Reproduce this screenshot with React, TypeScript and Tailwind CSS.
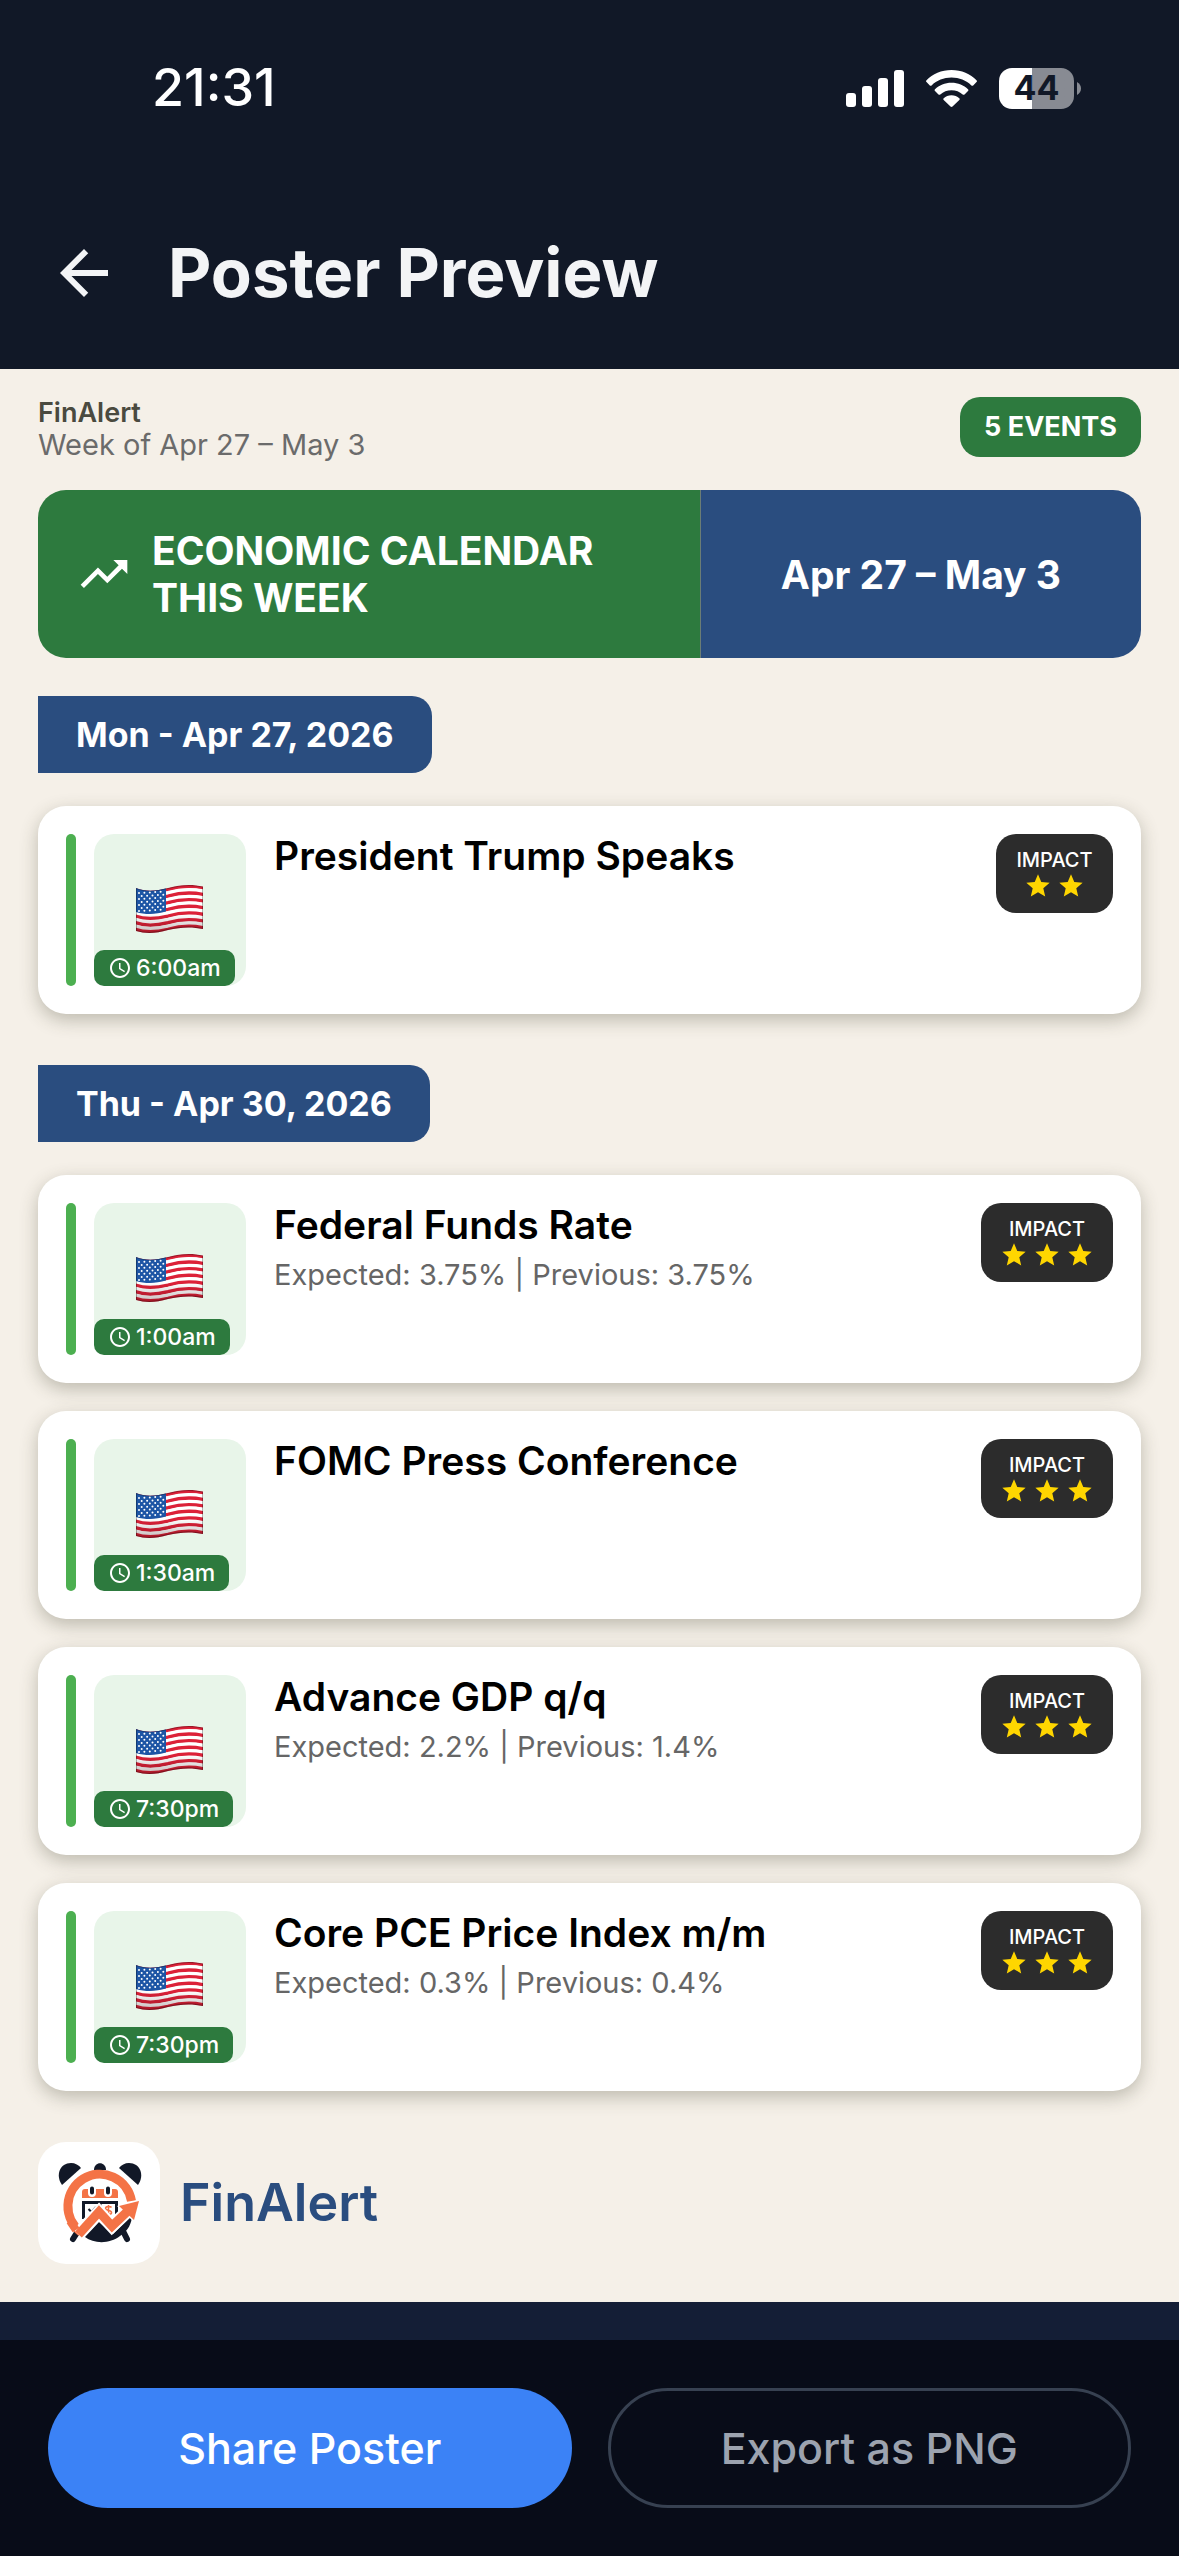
import React from 'react';
import { MdArrowBack, MdOutlineAccessTime, MdStar, MdTrendingUp } from 'react-icons/md';

interface EconomicEvent {
  id: string;
  title: string;
  time: string;
  impact: number;
  expected?: string;
  previous?: string;
}

interface DayGroup {
  label: string;
  events: EconomicEvent[];
}

const days: DayGroup[] = [
  {
    label: 'Mon - Apr 27, 2026',
    events: [{ id: 'trump', title: 'President Trump Speaks', time: '6:00am', impact: 2 }],
  },
  {
    label: 'Thu - Apr 30, 2026',
    events: [
      { id: 'ffr', title: 'Federal Funds Rate', time: '1:00am', impact: 3, expected: '3.75%', previous: '3.75%' },
      { id: 'fomc', title: 'FOMC Press Conference', time: '1:30am', impact: 3 },
      { id: 'gdp', title: 'Advance GDP q/q', time: '7:30pm', impact: 3, expected: '2.2%', previous: '1.4%' },
      { id: 'pce', title: 'Core PCE Price Index m/m', time: '7:30pm', impact: 3, expected: '0.3%', previous: '0.4%' },
    ],
  },
];

const StatusBar: React.FC = () => (
  <div className="flex items-center justify-between pt-14 pl-[152px] pr-[98px] text-white">
    <span className="text-[52px] leading-[64px] font-medium">21:31</span>
    <div className="flex items-center gap-[22px]">
      <svg width="58" height="37" viewBox="0 0 58 37" fill="currentColor">
        <rect x="0" y="23" width="10" height="14" rx="3" />
        <rect x="16" y="16" width="10" height="21" rx="3" />
        <rect x="32" y="8" width="10" height="29" rx="3" />
        <rect x="48" y="0" width="10" height="37" rx="3" />
      </svg>
      <svg width="51" height="37" viewBox="0 0 51 37" fill="currentColor">
        <path d="M25.500 0C35.500 0 44.500 4 50.500 10.300C51.100 10.900 51.100 11.500 50.500 12.100L47.200 15.400C46.600 16 46 16 45.400 15.400C40.200 10.500 33.200 7.600 25.500 7.600S10.800 10.500 5.600 15.400C5 16 4.400 16 3.800 15.400L.5 12.100C-.1 11.500-.1 10.900.5 10.300C6.500 4 15.500 0 25.500 0Z" />
        <path d="M25.500 12.700C32 12.700 37.900 15.200 42 19.200C42.600 19.800 42.600 20.400 42 21L38.500 24.400C37.900 25 37.300 25 36.700 24.400C33.700 21.800 29.800 20.200 25.500 20.200S17.300 21.800 14.300 24.400C13.700 25 13.100 25 12.500 24.400L9 21C8.400 20.400 8.400 19.800 9 19.200C13.100 15.200 19 12.700 25.500 12.700Z" />
        <path d="M25.500 25.200C28.500 25.200 31.300 26.300 33.300 28.200C33.900 28.800 33.900 29.400 33.300 30L26.500 36.500C25.900 37.100 25.100 37.100 24.500 36.500L17.700 30C17.100 29.400 17.100 28.800 17.700 28.200C19.700 26.300 22.500 25.200 25.500 25.200Z" />
      </svg>
      <div className="flex items-center gap-[3px]">
        <div className="flex h-[41px] w-[75px] items-center justify-center rounded-[13px] bg-linear-to-r from-white from-44% to-[#888b93] to-44% text-[34px] leading-none font-bold text-[#111827]">
          44
        </div>
        <svg width="4" height="13" viewBox="0 0 4 13" className="text-[#888b93]" fill="currentColor">
          <path d="M0 0C2.500 1.200 4 3.700 4 6.500S2.500 11.800 0 13Z" />
        </svg>
      </div>
    </div>
  </div>
);

const stripes = [0, 1, 2, 3, 4, 5, 6, 7, 8, 9, 10, 11, 12];

const UsFlag: React.FC = () => (
  <svg width="68" height="50" viewBox="0 0 68 50" role="img" aria-label="US">
    <defs>
      <clipPath id="flag-shape">
        <path d="M0 4C10 8 20 7 32 4C44 .5 56 0 67 2.500V45C56 42.500 44 43 32 46C20 49.500 10 50 0 47Z" />
      </clipPath>
      <linearGradient id="flag-shade" x1="0" y1="0" x2="0" y2="1">
        <stop offset="0.6" stopColor="#000" stopOpacity="0" />
        <stop offset="1" stopColor="#300" stopOpacity="0.28" />
      </linearGradient>
    </defs>
    <g clipPath="url(#flag-shape)">
      <rect width="68" height="50" fill="#fff" />
      {stripes.map((i) => (
        <path
          key={i}
          d="M-1 5.300C10 9.500 20 8.500 32 5.500C44 2 56 1.500 68 4"
          transform={`translate(0 ${i * 3.33})`}
          fill="none"
          stroke={i % 2 === 0 ? '#dc2138' : '#fff'}
          strokeWidth="3.600"
        />
      ))}
      <path d="M0 2C10 7 20 6 30 3V27.500C20 30.500 10 31 0 28Z" fill="#1d55a5" />
      {[0, 1, 2, 3, 4, 5, 6].map((row) =>
        [0, 1, 2, 3, 4].map((col) => (
          <circle
            key={`${row}-${col}`}
            cx={3 + col * 5.4 + (row % 2) * 2.7}
            cy={9 + row * 3 - col * 0.3}
            r="1"
            fill="#fff"
          />
        ))
      )}
      <rect width="68" height="50" fill="url(#flag-shade)" />
      <path
        d="M0 4C10 8 20 7 32 4C44 .5 56 0 67 2.500V45C56 42.500 44 43 32 46C20 49.500 10 50 0 47Z"
        fill="none"
        stroke="#000"
        strokeOpacity="0.3"
        strokeWidth="2"
      />
    </g>
  </svg>
);

const Logo: React.FC = () => (
  <svg width="96" height="96" viewBox="0 0 96 96" aria-hidden="true">
    {/* bells and knob */}
    <g fill="#111827">
      <path d="M11 30C4 20 9 8 20 8C24 8 28 10 30 13Z" />
      <path d="M87 30C94 20 89 8 78 8C74 8 70 10 68 13Z" />
      <path d="M43 15C43 6 55 6 55 15Z" />
    </g>
    {/* feet and lower body */}
    <path d="M27 76L22 84M72 76L76 84" stroke="#111827" strokeWidth="6" strokeLinecap="round" />
    <path d="M34 82L48 67L62 79L81 60C81 68 77 76 69 81C59 89 43 89 34 82Z" fill="#111827" />
    <path d="M30 77A32 32 0 1 1 80.500 46" fill="none" stroke="#f47346" strokeWidth="9" />
    {/* calendar */}
    <path d="M31 37Q31 34 34 34H64Q67 34 67 37V43H31Z" fill="#f47346" />
    <path d="M41 33V38M57 33V38" stroke="#fff" strokeWidth="8" strokeLinecap="round" />
    <path d="M41 33.500V37.500M57 33.500V37.500" stroke="#111827" strokeWidth="4" strokeLinecap="round" />
    <path d="M32.500 64V47.500H65.500V60M49 47V52" fill="none" stroke="#111827" strokeWidth="3" />
    <path d="M37.500 54L40.500 57L45 52" fill="none" stroke="#111827" strokeWidth="2" />
    <path
      d="M60.500 52.500C59.500 51 54.500 51 54.500 53.500C54.500 56 60.500 54.500 60.500 57.500C60.500 60 55.500 60 54.500 58M57.500 50V61"
      fill="none"
      stroke="#f47346"
      strokeWidth="1.600"
    />
    {/* rising arrow */}
    <path d="M27 79L48 57L61 71L79 54" fill="none" stroke="#fff" strokeWidth="13" />
    <path d="M66 51L90 44L84 68Z" fill="#fff" />
    <path d="M19 66L25 75" stroke="#f47346" strokeWidth="8" />
    <path d="M27.500 79.500L48 57L61 71L79 54" fill="none" stroke="#f47346" strokeWidth="9" />
    <path d="M68 51L88 46L83 65Z" fill="#f47346" />
  </svg>
);

const ImpactBadge: React.FC<{ level: number }> = ({ level }) => (
  <div className="flex min-w-[117px] flex-col items-center rounded-[20px] bg-[#2c2c2c] px-[19px] pt-[14px] pb-[13px]">
    <span className="text-[20px] leading-6 font-medium text-white">IMPACT</span>
    <div className="flex gap-[5px]">
      {Array.from({ length: level }, (_, i) => (
        <MdStar key={i} size={28} className="text-[#ffd600]" />
      ))}
    </div>
  </div>
);

const EventCard: React.FC<{ event: EconomicEvent }> = ({ event }) => (
  <li className="flex items-start rounded-[28px] bg-white p-7 shadow-[0_6px_18px_rgba(60,60,40,0.3)]">
    <div className="w-[10px] self-stretch rounded-full bg-[#4caf50]" />
    <div className="ml-[18px] flex h-[152px] w-[152px] flex-col justify-between rounded-[20px] bg-[#e8f5e9]">
      <div className="flex justify-center pt-[50px]">
        <UsFlag />
      </div>
      <div className="flex items-center gap-1 self-start rounded-[10px] bg-[#2d7a3e] px-[14px] py-1 text-[23px] leading-7 font-medium text-white">
        <MdOutlineAccessTime size={24} />
        {event.time}
      </div>
    </div>
    <div className="ml-7 flex-1">
      <h3 className="text-[39px] leading-[44px] font-semibold text-black">{event.title}</h3>
      {event.expected && (
        <p className="mt-[10px] text-[29px] leading-9 text-[#666666]">
          Expected: {event.expected} | Previous: {event.previous}
        </p>
      )}
    </div>
    <ImpactBadge level={event.impact} />
  </li>
);

export default function App() {
  return (
    <div className="flex min-h-screen flex-col bg-[#141e36] font-[Inter,sans-serif]">
      <header className="bg-[#111827] pb-[56px]">
        <StatusBar />
        <div className="mt-[113px] flex items-center gap-[48px] pl-12 text-[#f3f4f6]">
          <button type="button" aria-label="Back">
            <MdArrowBack size={72} />
          </button>
          <h1 className="text-[67px] leading-[80px] font-bold">Poster Preview</h1>
        </div>
      </header>

      <main className="bg-[#f5f0e8] px-[38px] pt-7 pb-[38px]">
        <div className="flex items-start justify-between">
          <div>
            <p className="text-[27px] leading-8 font-semibold text-[#4a4a3f]">FinAlert</p>
            <p className="text-[29px] leading-8 text-[#6b6b6b]">Week of Apr 27 – May 3</p>
          </div>
          <span className="rounded-[20px] bg-[#2d7a3e] px-6 py-[14px] text-[27px] leading-8 font-bold text-white">
            5 EVENTS
          </span>
        </div>

        <div className="mt-[29px] flex overflow-hidden rounded-[28px] text-[39px] leading-[47px] font-bold text-white">
          <div className="flex w-3/5 items-center gap-5 bg-[#2d7a3e] px-[38px] py-[37px]">
            <MdTrendingUp size={56} className="shrink-0" />
            <h2>ECONOMIC CALENDAR THIS WEEK</h2>
          </div>
          <div className="flex w-2/5 items-center justify-center border-l border-[#6b7d76] bg-[#2a4d7f]">
            Apr 27 – May 3
          </div>
        </div>

        {days.map((day, index) => (
          <section key={day.label} className={index === 0 ? 'mt-[38px]' : 'mt-[51px]'}>
            <h2 className="w-fit rounded-r-[20px] bg-[#2a4d7f] px-[38px] py-[18px] text-[34px] leading-[41px] font-bold text-white">
              {day.label}
            </h2>
            <ul className="mt-[33px] space-y-7">
              {day.events.map((event) => (
                <EventCard key={event.id} event={event} />
              ))}
            </ul>
          </section>
        ))}

        <div className="mt-[51px] flex items-center gap-5">
          <div className="flex h-[122px] w-[122px] items-center justify-center rounded-[28px] bg-white">
            <Logo />
          </div>
          <span className="text-[52px] leading-[64px] font-semibold text-[#2a4d7f]">FinAlert</span>
        </div>
      </main>

      <footer className="mt-[38px] grid flex-1 grid-cols-2 items-start gap-9 bg-[#080c18] px-12 py-12 text-[43px] font-medium">
        <button type="button" className="h-[120px] rounded-full bg-[#3b82f6] text-white">
          Share Poster
        </button>
        <button
          type="button"
          className="h-[120px] rounded-full border-[3px] border-[#374151] text-[#9ca3af]"
        >
          Export as PNG
        </button>
      </footer>
    </div>
  );
}
